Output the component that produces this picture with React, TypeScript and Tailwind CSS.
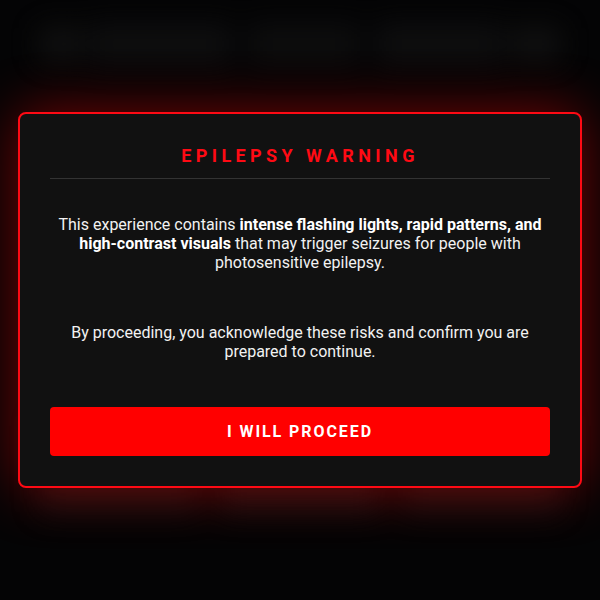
import { useState } from 'react';

// blurred page content sitting behind the warning modal
function BackdropPage() {
  return (
    <div className="absolute inset-0 blur-[14px] opacity-60">
      <div className="flex h-full flex-col gap-6 px-10 py-6">
        <div className="flex items-center justify-between">
          <div className="h-8 w-10 rounded bg-[#1a1a1a]" />
          <div className="flex gap-4">
            <div className="h-10 w-36 rounded bg-[#161616]" />
            <div className="h-10 w-28 rounded bg-[#141414]" />
            <div className="h-10 w-32 rounded bg-[#161616]" />
          </div>
          <div className="h-8 w-12 rounded bg-[#1a1a1a]" />
        </div>
        <div className="flex-1" />
        <div className="grid grid-cols-3 gap-6 pb-16">
          <div className="h-24 rounded bg-[#151515]" />
          <div className="h-24 rounded bg-[#171717]" />
          <div className="h-24 rounded bg-[#151515]" />
        </div>
      </div>
    </div>
  );
}

export default function App() {
  const [accepted, setAccepted] = useState(false);

  return (
    <div
      className="relative flex h-[600px] w-full items-center justify-center overflow-hidden bg-[#040405]"
      style={{ fontFamily: 'Roboto, "Liberation Sans", sans-serif' }}
    >
      <BackdropPage />
      <div className="relative w-[564px] rounded-lg border-2 border-[#ff0a14] bg-[#111111] p-[30px] text-center shadow-[0_0_55px_rgba(255,0,0,0.45)]">
        <h1 className="pb-[10px] text-[18px] leading-6 font-bold tracking-[0.245em] text-[#ff0a14]">
          EPILEPSY WARNING
        </h1>
        <div className="h-px bg-[#333333]" />
        <p className="mt-[36px] text-[16px] leading-[19.2px] text-[#f2f2f2]">
          This experience contains{' '}
          <strong className="font-bold text-white">
            intense flashing lights, rapid patterns, and high-contrast visuals
          </strong>{' '}
          that may trigger seizures for people with photosensitive epilepsy.
        </p>
        <p className="mt-[50px] text-[16px] leading-[19.2px] text-[#f2f2f2]">
          By proceeding, you acknowledge these risks and confirm you are prepared to continue.
        </p>
        <button
          onClick={() => setAccepted(true)}
          className="mt-[46px] h-[49px] w-full rounded bg-[#ff0000] text-[16px] font-bold tracking-[0.12em] text-white"
        >
          {accepted ? 'I WILL PROCEED' : 'I WILL PROCEED'}
        </button>
      </div>
    </div>
  );
}
